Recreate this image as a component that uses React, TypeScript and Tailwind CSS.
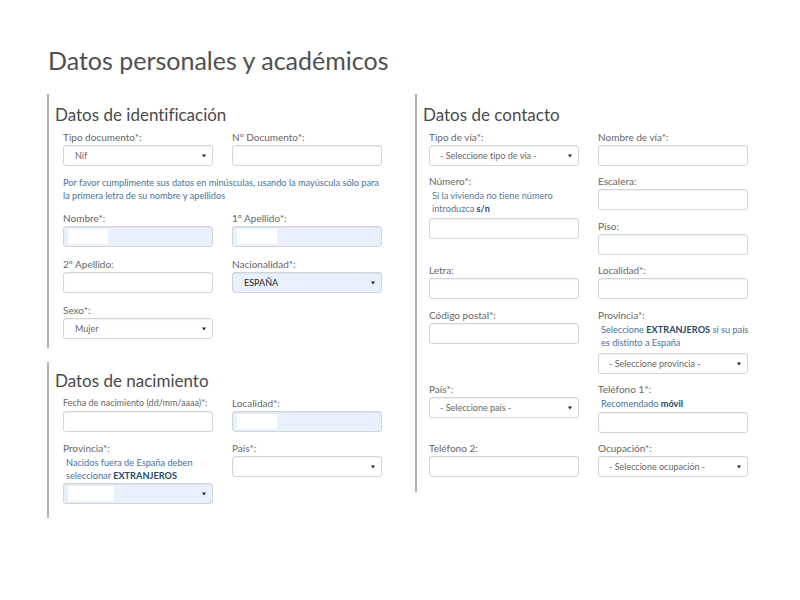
import React from 'react';

type BoxProps = {
  text?: string;
  dark?: boolean;
  autofill?: boolean;
  blank?: string;
  select?: boolean;
  center?: boolean;
};

function Box({ text, dark, autofill, blank, select, center }: BoxProps) {
  return (
    <div
      className={`relative h-[21px] w-[150px] rounded-[3px] border border-[#d4d4d4] shadow-[inset_0_1px_1px_rgba(0,0,0,0.06)] flex items-center ${
        autofill ? 'bg-[#e8f0fe]' : 'bg-white'
      }`}
    >
      {blank && <div className={`absolute left-[4px] top-[2px] bottom-[2px] bg-white ${blank}`} />}
      {text && (
        <span
          className={`text-[9px] leading-none ${dark ? 'text-[#333] font-medium' : 'text-[#666]'} ${
            center ? 'pl-[10px]' : 'pl-[11px]'
          }`}
        >
          {text}
        </span>
      )}
      {select && (
        <svg className="absolute right-[6px] top-[8px]" width="4" height="4" viewBox="0 0 4 4">
          <path d="M0 0.5 L4 0.5 L2 3.5 Z" fill="#222" />
        </svg>
      )}
    </div>
  );
}

function Label({ children, small }: { children: React.ReactNode; small?: boolean }) {
  return (
    <div className={`${small ? 'text-[9px]' : 'text-[10px]'} leading-[14px] text-[#666] h-[14px] whitespace-nowrap`}>
      {children}
    </div>
  );
}

function Help({ children }: { children: React.ReactNode }) {
  return <div className="text-[9.2px] leading-[13px] text-[#46739b] whitespace-nowrap">{children}</div>;
}

function B({ children }: { children: React.ReactNode }) {
  return <span className="font-bold text-[#24496b]">{children}</span>;
}

function Field({ label, small, help, helpGap, ...box }: BoxProps & { label: string; small?: boolean; help?: React.ReactNode; helpGap?: string }) {
  return (
    <div className="flex flex-col">
      <Label small={small}>{label}</Label>
      {help && <div className="mt-[1px]">{help}</div>}
      <div className={help ? helpGap ?? 'mt-[3px]' : 'mt-[1px]'}>
        <Box {...box} />
      </div>
    </div>
  );
}

function Heading({ children }: { children: React.ReactNode }) {
  return <h2 className="text-[17px] leading-[24px] text-[#4a4a4a] pl-[6px]">{children}</h2>;
}

export default function App() {
  return (
    <div className="w-[800px] h-[600px] bg-white font-['Lato','Open_Sans',sans-serif] [font-variant-ligatures:none] overflow-hidden">
      <h1 className="pl-[48px] pt-[44px] text-[25px] leading-[32px] text-[#505050]">Datos personales y académicos</h1>

      <div className="flex pl-[47px] mt-[18px]">
        {/* columna izquierda */}
        <div className="w-[368px] flex flex-col">
          <section className="border-l-2 border-[#b0b0b0] pt-[9px] pb-[9px]">
            <Heading>Datos de identificación</Heading>
            <div className="pl-[14px] mt-[3px] flex flex-col">
              <div className="grid grid-cols-[150px_150px] gap-x-[19px]">
                <Field label="Tipo documento*:" text="Nif" select />
                <Field label="Nº Documento*:" />
              </div>
              <div className="mt-[10px]">
                <Help>
                  Por favor cumplimente sus datos en minúsculas, usando la mayúscula sólo para
                  <br />
                  la primera letra de su nombre y apellidos
                </Help>
              </div>
              <div className="grid grid-cols-[150px_150px] gap-x-[19px] gap-y-[10px] mt-[9px]">
                <Field label="Nombre*:" autofill blank="w-[40px]" />
                <Field label="1º Apellido*:" autofill blank="w-[40px]" />
                <Field label="2º Apellido:" />
                <Field label="Nacionalidad*:" text="ESPAÑA" dark autofill select />
                <Field label="Sexo*:" text="Mujer" select />
              </div>
            </div>
          </section>

          <section className="border-l-2 border-[#b0b0b0] mt-[14px] pt-[7px] pb-[14px]">
            <Heading>Datos de nacimiento</Heading>
            <div className="pl-[14px] mt-[3px] grid grid-cols-[150px_150px] gap-x-[19px] gap-y-[9px] items-start">
              <Field label="Fecha de nacimiento (dd/mm/aaaa)*:" small />
              <Field label="Localidad*:" autofill blank="w-[40px]" />
              <Field
                label="Provincia*:"
                autofill
                blank="w-[46px]"
                select
                help={
                  <div className="pl-[3px]">
                    <Help>
                      Nacidos fuera de España deben
                      <br />
                      seleccionar <B>EXTRANJEROS</B>
                    </Help>
                  </div>
                }
                helpGap="mt-[1px]"
              />
              <Field label="País*:" select />
            </div>
          </section>
        </div>

        {/* columna derecha */}
        <section className="border-l-2 border-[#b0b0b0] pt-[9px] pb-[15px] self-start">
          <Heading>Datos de contacto</Heading>
          <div className="pl-[12px] pr-[10px] mt-[3px] flex flex-col gap-y-[8px]">
            <div className="grid grid-cols-[150px_150px] gap-x-[19px]">
              <Field label="Tipo de vía*:" text="- Seleccione tipo de vía -" center select />
              <Field label="Nombre de vía*:" />
            </div>
            <div className="grid grid-cols-[150px_150px] gap-x-[19px] items-start">
              <Field
                label="Número*:"
                help={
                  <div className="pl-[3px]">
                    <Help>
                      <span className="text-[#557a9c]">Si la vivienda no tiene número</span>
                      <br />
                      <span className="text-[#557a9c]">introduzca</span> <B>s/n</B>
                    </Help>
                  </div>
                }
              />
              <div className="flex flex-col gap-y-[9px]">
                <Field label="Escalera:" />
                <Field label="Piso:" />
              </div>
            </div>
            <div className="grid grid-cols-[150px_150px] gap-x-[19px]">
              <Field label="Letra:" />
              <Field label="Localidad*:" />
            </div>
            <div className="grid grid-cols-[150px_150px] gap-x-[19px] items-start mt-[1px]">
              <Field label="Código postal*:" />
              <Field
                label="Provincia*:"
                text="- Seleccione provincia -"
                center
                select
                help={
                  <div className="pl-[3px]">
                    <Help>
                      Seleccione <B>EXTRANJEROS</B> si su país
                      <br />
                      es distinto a España
                    </Help>
                  </div>
                }
                helpGap="mt-[4px]"
              />
            </div>
            <div className="grid grid-cols-[150px_150px] gap-x-[19px] items-start">
              <Field label="País*:" text="- Seleccione país -" center select />
              <Field
                label="Teléfono 1*:"
                help={
                  <div className="pl-[3px]">
                    <Help>
                      Recomendado <B>móvil</B>
                    </Help>
                  </div>
                }
                helpGap="mt-[2px]"
              />
            </div>
            <div className="grid grid-cols-[150px_150px] gap-x-[19px]">
              <Field label="Teléfono 2:" />
              <Field label="Ocupación*:" text="- Seleccione ocupación -" center select />
            </div>
          </div>
        </section>
      </div>
    </div>
  );
}
